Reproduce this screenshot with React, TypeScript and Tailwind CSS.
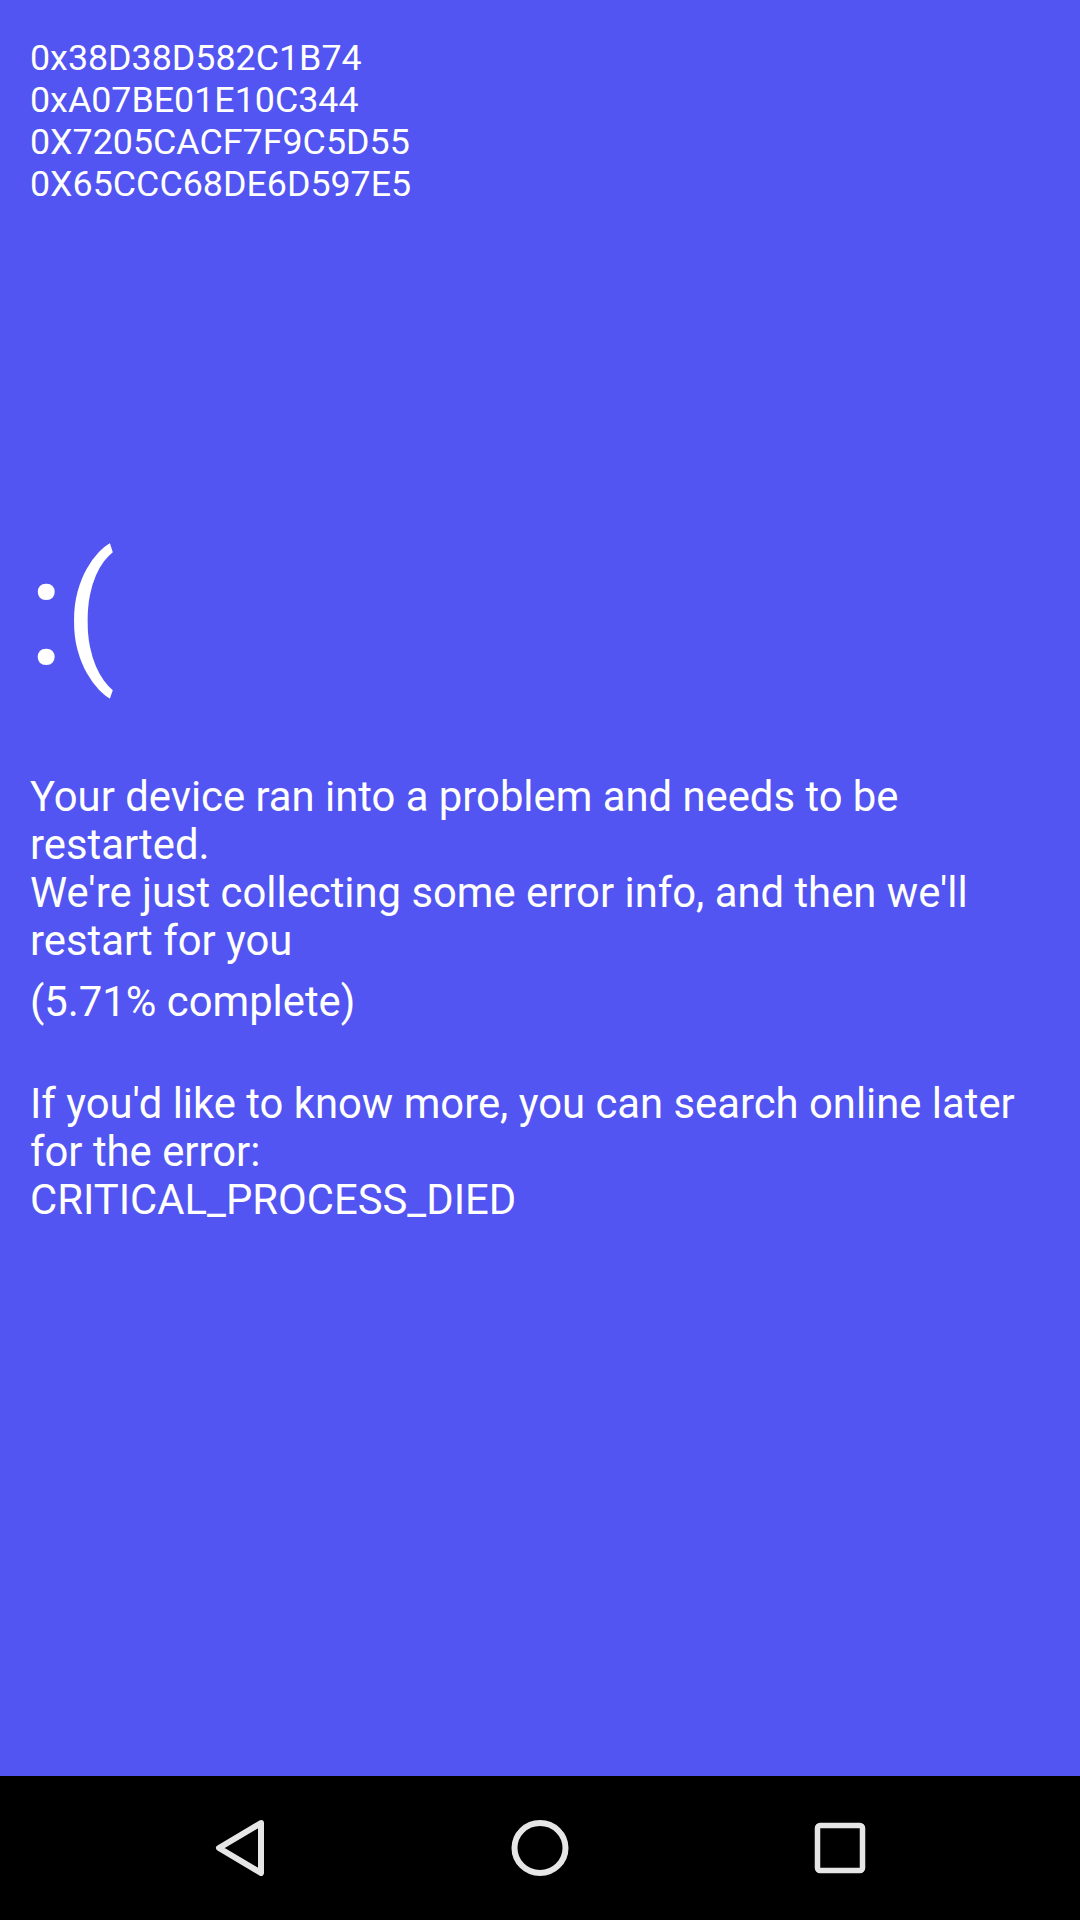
import React from 'react';

const hexCodes = ['0x38D38D582C1B74', '0xA07BE01E10C344', '0X7205CACF7F9C5D55', '0X65CCC68DE6D597E5'];

const BackIcon = () => (
    <svg width="56" height="56" viewBox="0 0 56 56" fill="none">
        <path d="M49 3 L7 28 L49 53 Z" stroke="#e6e6e6" strokeWidth="6" strokeLinejoin="round" />
    </svg>
);

const HomeIcon = () => (
    <svg width="58" height="56" viewBox="0 0 58 56" fill="none">
        <ellipse cx="29" cy="28" rx="25.5" ry="25" stroke="#e6e6e6" strokeWidth="6" />
    </svg>
);

const RecentsIcon = () => (
    <svg width="52" height="52" viewBox="0 0 52 52" fill="none">
        <rect x="3.5" y="3.5" width="45" height="45" rx="2.5" stroke="#e6e6e6" strokeWidth="5.5" />
    </svg>
);

export default function App() {
    return (
        <div className="h-[1920px] w-[1080px] flex flex-col font-['Roboto',sans-serif] text-white">
            {/* Error screen */}
            <div className="flex-1 bg-[#5255f1] px-[30px] pt-[37px]">
                <div className="text-[35.8px] leading-[42px]">
                    {hexCodes.map((code) => (
                        <div key={code}>{code}</div>
                    ))}
                </div>

                <div className="mt-[333px] text-[150px] leading-[150px] -ml-[2px]">:(</div>

                <div className="mt-[85px] text-[41.8px] leading-[48px]">
                    <p>
                        Your device ran into a problem and needs to be restarted.
                        <br />
                        We're just collecting some error info, and then we'll restart for you
                    </p>
                    <p className="mt-[13px]">(5.71% complete)</p>
                    <p className="mt-[54px]">
                        If you'd like to know more, you can search online later for the error:
                        <br />
                        CRITICAL_PROCESS_DIED
                    </p>
                </div>
            </div>

            {/* Nav bar */}
            <div className="h-[144px] bg-black flex items-center justify-center">
                <div className="w-[300px] flex justify-center"><BackIcon /></div>
                <div className="w-[300px] flex justify-center"><HomeIcon /></div>
                <div className="w-[300px] flex justify-center"><RecentsIcon /></div>
            </div>
        </div>
    );
}
